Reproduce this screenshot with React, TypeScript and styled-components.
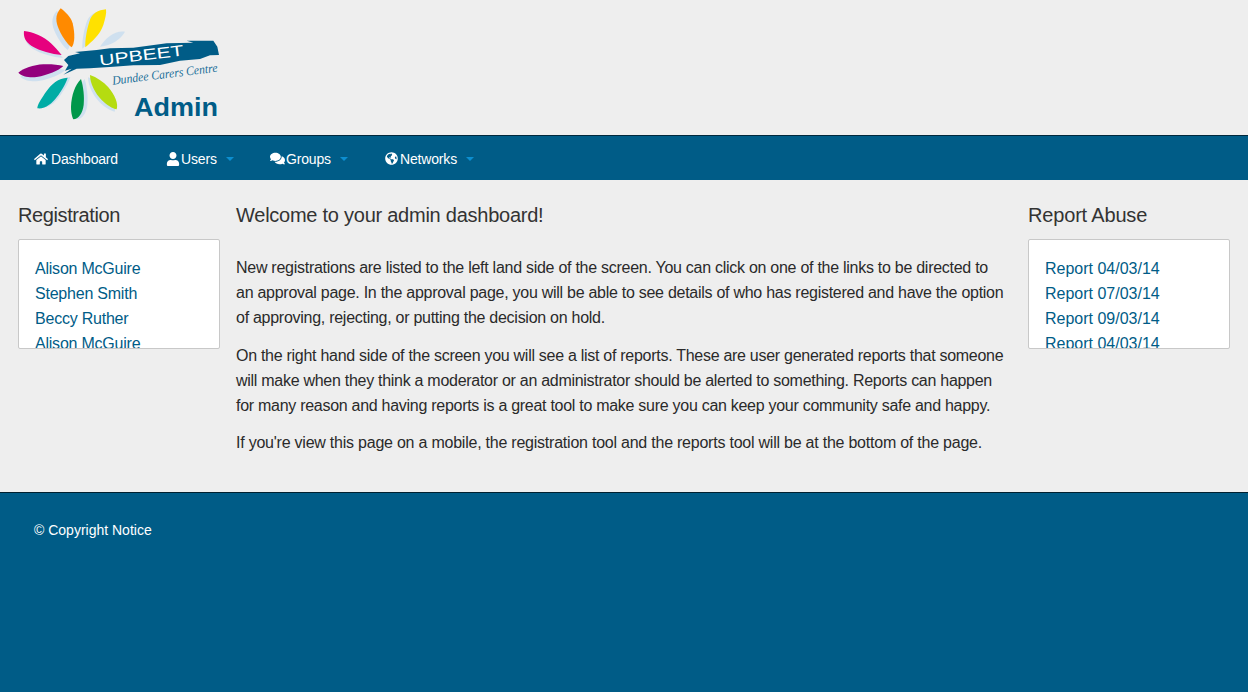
import React from "react";
import styled, { createGlobalStyle } from "styled-components";
import { FaHome, FaUser, FaComments, FaGlobeAmericas } from "react-icons/fa";

const Global = createGlobalStyle`
  html, body { margin: 0; padding: 0; background: #eeeeee; }
  body { font-family: "Liberation Sans", Arial, sans-serif; color: #2a2a2a; }
  * { box-sizing: border-box; }
`;

const Page = styled.div`
  min-height: 692px;
  display: flex;
  flex-direction: column;
`;
const Header = styled.header`
  height: 135px;
`;
const LogoSvg = styled.svg`
  display: block;
  width: 240px;
  height: 135px;
`;
const Nav = styled.nav`
  height: 45px;
  background: #005c87;
  border-top: 1px solid #00283c;
  display: flex;
  align-items: center;
  padding-left: 34px;
  padding-top: 1px;
`;
const NavItem = styled.a<{ $w: number }>`
  width: ${(p) => p.$w}px;
  flex: none;
  display: flex;
  align-items: center;
  color: #ffffff;
  font-size: 14px;
  letter-spacing: -0.012em;
  svg { flex: none; }
`;
const NavLabel = styled.span<{ $gap: number }>`
  margin-left: ${(p) => p.$gap}px;
`;
const Caret = styled.i`
  width: 0;
  height: 0;
  margin-left: 9px;
  border: 4px solid transparent;
  border-bottom-width: 0;
  border-top: 4px solid #0d8ed0;
`;
const Content = styled.main`
  height: 312px;
  display: grid;
  grid-template-columns: 202px 1fr 202px;
  column-gap: 16px;
  padding: 0 18px;
`;
const Side = styled.aside`
  padding-top: 22px;
`;
const Heading = styled.h2<{ $track: number }>`
  margin: 0;
  font-size: 20px;
  line-height: 26px;
  font-weight: 400;
  letter-spacing: ${(p) => p.$track}px;
  color: #333333;
`;
const ListBox = styled.ul<{ $track: number }>`
  margin: 11px 0 0;
  list-style: none;
  height: 110px;
  overflow: hidden;
  padding: 16px 16px 0;
  background: #ffffff;
  border: 1px solid #c8c8c8;
  border-radius: 2px;
  letter-spacing: ${(p) => p.$track}px;
`;
const ListItem = styled.li`
  font-size: 16px;
  line-height: 25px;
  color: #005c87;
`;
const Body = styled.section`
  padding-top: 22px;
  padding-right: 5px;
`;
const Lead = styled.p<{ $track: number }>`
  margin: 0 0 12.6px;
  font-size: 16px;
  line-height: 25px;
  letter-spacing: ${(p) => p.$track}px;
`;
const LeadFirst = styled(Lead)`
  margin-top: 27px;
`;
const Footer = styled.footer`
  flex: 1;
  background: #005c87;
  border-top: 1px solid #00202f;
  padding: 27px 34px;
  color: #ffffff;
  font-size: 14px;
  line-height: 20px;
`;

const petals: { d: string; c: string; s: string }[] = [
  { d: "M182 25 C165 45 165 65 180 95 C190 115 205 135 215 142 C225 130 225 100 218 70 C212 50 195 35 182 25Z", c: "#ff8a00", s: "translate(-12 8)" },
  { d: "M318 28 C295 30 275 40 268 65 C260 90 255 120 256 142 C275 125 300 105 310 75 C316 55 320 40 318 28Z", c: "#ffe100", s: "translate(-9 4)" },
  { d: "M72 93 C70 110 75 125 95 138 C120 153 155 162 185 165 C165 140 145 118 115 105 C100 98 85 95 72 93Z", c: "#e6007e", s: "translate(4 9)" },
  { d: "M55 218 C70 205 100 195 130 193 C150 192 175 194 190 198 C175 212 145 225 110 231 C90 234 65 230 55 218Z", c: "#93007d", s: "translate(6 12)" },
  { d: "M203 233 C175 235 155 250 135 280 C122 300 112 315 112 325 C135 328 155 312 170 292 C185 272 198 250 203 233Z", c: "#00aca5", s: "translate(8 -2)" },
  { d: "M243 237 C225 255 215 285 213 320 C213 340 217 352 220 358 C235 358 248 340 251 315 C254 290 250 260 243 237Z", c: "#00974a", s: "translate(11 0)" },
  { d: "M270 225 C270 250 285 280 305 300 C320 315 338 326 350 328 C356 312 345 285 325 262 C310 245 290 232 270 225Z", c: "#b5dc10", s: "translate(-6 7)" },
];

const Logo = () => (
  <LogoSvg viewBox="0 0 720 405" aria-label="Upbeet Dundee Carers Centre Admin">
    {petals.map((p, i) => (
      <path key={i} d={p.d} fill="#cfe0ef" transform={p.s} />
    ))}
    <path d="M375 95 C345 90 315 115 300 140 C335 136 362 118 375 95Z" fill="#cfe0ef" />
    {petals.map((p, i) => (
      <path key={i} d={p.d} fill={p.c} />
    ))}
    <path
      d="M192 180 L205 168 L240 160 L225 156 L290 150 L330 145 L400 143 L500 130 L580 128 L560 122 L640 122 L652 140 L657 165 L630 166 L600 177 L540 182 L480 195 L400 196 L340 200 L270 205 L230 206 L190 224 L215 206 L195 212 L205 195Z"
      fill="#005c87"
    />
    <text x="300" y="197" transform="rotate(-7 300 197)" fill="#ffffff" fontFamily="'Liberation Sans', sans-serif" fontSize="46" textLength="254" lengthAdjust="spacingAndGlyphs">
      UPBEET
    </text>
    <text x="338" y="254" transform="rotate(-7 338 254)" fill="#1b6f99" fontFamily="'Liberation Serif', serif" fontStyle="italic" fontSize="38" textLength="318" lengthAdjust="spacingAndGlyphs">
      Dundee Carers Centre
    </text>
    <text x="402" y="348" fill="#005c87" fontFamily="'Liberation Sans', sans-serif" fontWeight="700" fontSize="80" textLength="252" lengthAdjust="spacingAndGlyphs">
      Admin
    </text>
  </LogoSvg>
);

const regs = ["Alison McGuire", "Stephen Smith", "Beccy Ruther", "Alison McGuire", "Stephen Smith"];
const reports = ["Report 04/03/14", "Report 07/03/14", "Report 09/03/14", "Report 04/03/14", "Report 07/03/14"];

export default function App() {
  return (
    <Page>
      <Global />
      <Header>
        <Logo />
      </Header>
      <Nav>
        <NavItem $w={132}>
          <FaHome size={14} />
          <NavLabel $gap={3}>Dashboard</NavLabel>
        </NavItem>
        <NavItem $w={104}>
          <FaUser size={14} />
          <NavLabel $gap={1}>Users</NavLabel>
          <Caret />
        </NavItem>
        <NavItem $w={115}>
          <FaComments size={15} />
          <NavLabel $gap={1}>Groups</NavLabel>
          <Caret />
        </NavItem>
        <NavItem $w={110}>
          <FaGlobeAmericas size={13} />
          <NavLabel $gap={2}>Networks</NavLabel>
          <Caret />
        </NavItem>
      </Nav>
      <Content>
        <Side>
          <Heading $track={-0.4}>Registration</Heading>
          <ListBox $track={-0.22}>
            {regs.map((r, i) => (
              <ListItem key={i}>{r}</ListItem>
            ))}
          </ListBox>
        </Side>
        <Body>
          <Heading $track={-0.25}>Welcome to your admin dashboard!</Heading>
          <LeadFirst $track={-0.27}>
            New registrations are listed to the left land side of the screen. You can click on one of the links to be directed to an approval page. In the approval page, you will be able to see details of who has registered and have the option of approving, rejecting, or putting the decision on hold.
          </LeadFirst>
          <Lead $track={-0.28}>
            On the right hand side of the screen you will see a list of reports. These are user generated reports that someone will make when they think a moderator or an administrator should be alerted to something. Reports can happen for many reason and having reports is a great tool to make sure you can keep your community safe and happy.
          </Lead>
          <Lead $track={-0.23}>
            If you're view this page on a mobile, the registration tool and the reports tool will be at the bottom of the page.
          </Lead>
        </Body>
        <Side>
          <Heading $track={-0.17}>Report Abuse</Heading>
          <ListBox $track={0}>
            {reports.map((r, i) => (
              <ListItem key={i}>{r}</ListItem>
            ))}
          </ListBox>
        </Side>
      </Content>
      <Footer>© Copyright Notice</Footer>
    </Page>
  );
}
